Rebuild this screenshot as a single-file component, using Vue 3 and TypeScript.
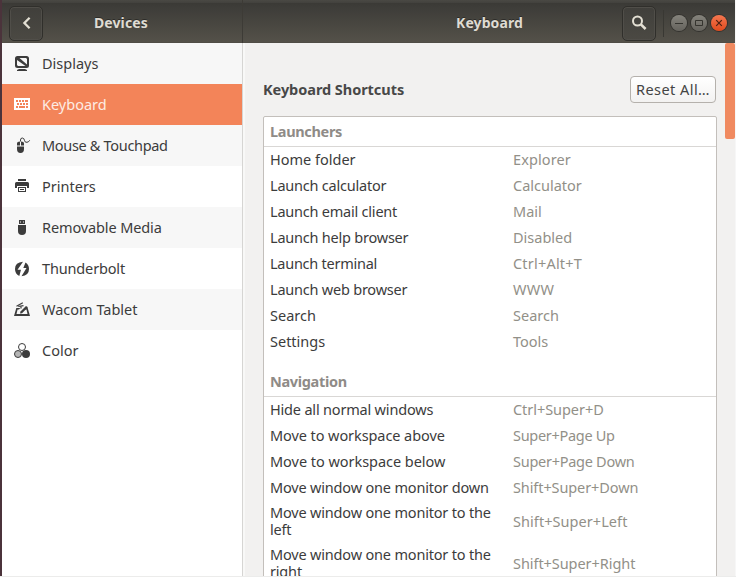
<script setup lang="ts">
// `t` and `kt` are letter-spacing adjustments in pixels.
interface Device { id: string; label: string; t?: number }
interface Shortcut { name: string; keys: string; t?: number; kt?: number }
interface Group { title: string; items: Shortcut[] }

const devices: Device[] = [
  { id: 'displays', label: 'Displays' },
  { id: 'keyboard', label: 'Keyboard' },
  { id: 'mouse', label: 'Mouse & Touchpad', t: -0.32 },
  { id: 'printers', label: 'Printers' },
  { id: 'media', label: 'Removable Media', t: -0.12 },
  { id: 'thunderbolt', label: 'Thunderbolt', t: -0.15 },
  { id: 'wacom', label: 'Wacom Tablet' },
  { id: 'color', label: 'Color' },
]

const groups: Group[] = [
  {
    title: 'Launchers',
    items: [
      { name: 'Home folder', keys: 'Explorer', kt: 0.1 },
      { name: 'Launch calculator', keys: 'Calculator', t: -0.22 },
      { name: 'Launch email client', keys: 'Mail', t: -0.22 },
      { name: 'Launch help browser', keys: 'Disabled', t: -0.22 },
      { name: 'Launch terminal', keys: 'Ctrl+Alt+T', t: -0.26, kt: 0.2 },
      { name: 'Launch web browser', keys: 'WWW', t: -0.22, kt: 0.3 },
      { name: 'Search', keys: 'Search' },
      { name: 'Settings', keys: 'Tools' },
    ],
  },
  {
    title: 'Navigation',
    items: [
      { name: 'Hide all normal windows', keys: 'Ctrl+Super+D', t: -0.19, kt: -0.05 },
      { name: 'Move to workspace above', keys: 'Super+Page Up', t: -0.08, kt: -0.3 },
      { name: 'Move to workspace below', keys: 'Super+Page Down', t: -0.04, kt: -0.27 },
      { name: 'Move window one monitor down', keys: 'Shift+Super+Down', t: -0.18, kt: -0.1 },
      { name: 'Move window one monitor to the left', keys: 'Shift+Super+Left', t: -0.18, kt: 0.06 },
      { name: 'Move window one monitor to the right', keys: 'Shift+Super+Right', t: -0.18, kt: -0.06 },
    ],
  },
]

const spacing = (v?: number) => ({ letterSpacing: `${v ?? 0}px` })
</script>

<template>
  <div class="window">
    <header class="bar">
      <div class="bar-left">
        <button class="hbtn" aria-label="Back">
          <svg width="16" height="16" viewBox="0 0 16 16"><path d="M11.600 2.800 6.400 8l5.200 5.200" fill="none" stroke="#e3dfd3" stroke-width="2.300" /></svg>
        </button>
        <h1 class="title">Devices</h1>
      </div>
      <div class="bar-right">
        <h1 class="title">Keyboard</h1>
        <button class="hbtn" aria-label="Find">
          <svg width="16" height="16" viewBox="0 0 16 16"><circle cx="6.500" cy="6" r="4.500" fill="none" stroke="#e3dfd3" stroke-width="2" /><path d="m9.600 9.100 5 4.900" stroke="#e3dfd3" stroke-width="2.600" /></svg>
        </button>
        <div class="controls">
          <span class="ctl"><svg width="16" height="16" viewBox="0 0 16 16"><path d="M4 8.500h8" stroke="#35342f" /></svg></span>
          <span class="ctl"><svg width="16" height="16" viewBox="0 0 16 16"><path d="M4.500 5.500h7v5h-7z" fill="none" stroke="#35342f" /></svg></span>
          <span class="ctl close"><svg width="16" height="16" viewBox="0 0 16 16"><path d="m5.200 5.200 5.600 5.600m0-5.600-5.600 5.600" stroke="#4b2113" stroke-width="1.200" /></svg></span>
        </div>
      </div>
    </header>
    <div class="body">
      <nav class="side">
        <a v-for="d in devices" :key="d.id" class="dev" :class="[d.id, { active: d.id === 'keyboard' }]">
          <svg class="ico" width="16" height="16" viewBox="0 0 16 16" fill="currentColor">
            <g v-if="d.id === 'displays'"><path fill-rule="evenodd" d="M3.500 0h9A2.500 2.500 0 0 1 15 2.500v7a2.500 2.500 0 0 1-2.500 2.500h-9A2.500 2.500 0 0 1 1 9.500v-7A2.500 2.500 0 0 1 3.500 0zM3 3v6l1 1h8l1-1V3l-1-1H4z" /><path d="M3 2h2.500L13 8.500V10h-1.500L3 4z" /><path d="M5 13h6l2 1v1H3v-1z" /></g>
            <g v-else-if="d.id === 'keyboard'"><path fill-rule="evenodd" d="M0 1h16v12H0zM2 3v2h2V3zm3 0v2h2V3zm3 0v2h2V3zm3 0v2h3V3zM3 6v2h2V6zm3 0v2h2V6zm3 0v2h2V6zm3 0v2h2V6zM2 9v2h2V9zm3 0v2h6V9zm7 0v2h2V9z" /></g>
            <g v-else-if="d.id === 'mouse'"><path d="M3 7.500V5.500Q3 3.500 6 3.500v4zM7 3.500Q10 3.500 10 5.500v2H7zM3 8.500h7v2.500a3.500 4 0 0 1-7 0z" /><path d="M6.500 3.500V2Q6.500 0 8.300 0T10.500 2.400 13 4.300 15.700 2.300" fill="none" stroke="currentColor" /></g>
            <g v-else-if="d.id === 'printers'"><path d="M4 0h8v2H4zM2.500 3h11Q15 3 15 4.500V9h-2V7H3v2H1V4.500Q1 3 2.500 3z" /><path fill-rule="evenodd" d="M4 8h8v5H4zM5 9v3h6V9z" /><path d="M6 10h4v1H6z" /></g>
            <g v-else-if="d.id === 'media'"><path fill-rule="evenodd" d="M5 0h6v4H5zM6 1.500v1h1v-1zm3 0v1h1v-1z" /><path d="M4 5h8v6q0 4-4 4T4 11z" /></g>
            <g v-else-if="d.id === 'thunderbolt'"><path d="M9 .8 3.500 8.800H7L5.300 15Q1 13 1 8 1 1.300 9 .8z" /><path d="M11.500 1.600Q15 4 15 8q0 6.500-7.500 7.200L12.500 7H9.300z" /></g>
            <g v-else-if="d.id === 'wacom'"><path d="M2.300 6h4L5 7.500H3.600L2.500 12h11l-1-4.500H10L11.300 6h2.400L16 14H0z" /><path d="m6.500 9.500 5.500-5.500 2 1.200-6 6L6 11.500z" /><path d="M2.500 4.300 8.800.7M4.300 4.500 9.500 3.600M7 4.500v2" fill="none" stroke="currentColor" stroke-width="1.200" /></g>
            <g v-else><circle cx="8" cy="4" r="3.500" fill="none" stroke="currentColor" /><circle cx="4" cy="11" r="3.500" fill="#b5b5b5" stroke="currentColor" /><circle cx="12" cy="11" r="4" /></g>
          </svg>
          <span :style="spacing(d.t)">{{ d.label }}</span>
        </a>
      </nav>
      <main class="main">
        <div class="heading"><h2>Keyboard Shortcuts</h2><button class="reset">Reset All…</button></div>
        <div class="list">
          <section v-for="g in groups" :key="g.title" class="group">
            <h3>{{ g.title }}</h3>
            <div v-for="s in g.items" :key="s.name" class="row"><span class="name" :style="spacing(s.t)">{{ s.name }}</span><span class="keys" :style="spacing(s.kt)">{{ s.keys }}</span></div>
          </section>
        </div>
        <div class="thumb"></div>
      </main>
    </div>
  </div>
</template>

<style>
body { background: #ececeb; overflow: hidden; }
</style>
<style scoped>
* { box-sizing: border-box; }
.window { width: 736px; height: 576px; overflow: hidden; display: flex; flex-direction: column; border-left: 2px solid #4b333b; border-right: 1px solid #f7f7f7; background: #f2f1f0; font: 14.5px/17px "Noto Sans", sans-serif; color: #3c3c3c; }
h1, h2, h3 { margin: 0; font-size: inherit; font-weight: 700; }
h2 { color: #484848; letter-spacing: -0.05px; }
button { font: inherit; padding: 0; }
.bar { flex: none; height: 43px; display: flex; color: #dfdbd2; background: linear-gradient(#4a4944 0, #42413d 3px, #3b3a36 3px, #3e3d39 8px, #545149 42px, #4c4943 43px); }
.bar-left { width: 241px; padding: 3px 0 0 7px; display: flex; align-items: center; border-right: 1px solid #3d3b36; }
.bar-left .title { margin-left: 51px; }
.bar-right { flex: 1; padding-top: 3px; display: flex; align-items: center; }
.bar-right .title { margin-left: 213px; width: 166px; }
.title { font-size: 14px; line-height: 20px; letter-spacing: 0.1px; text-shadow: 0 -1px #2d2c29; }
.hbtn { width: 34px; height: 35px; border: 1px solid #302f2b; border-radius: 5px; background: linear-gradient(#403f3b, #4b4943); box-shadow: inset 0 0 0 1px #504e49; display: flex; align-items: center; justify-content: center; }
.controls { margin-left: 7px; padding-left: 7px; height: 27px; display: flex; align-items: center; gap: 4px; border-left: 1px solid #393833; }
.ctl { width: 16px; height: 16px; border-radius: 50%; background: linear-gradient(#85837c, #65635d); box-shadow: 0 0 0 1px #33322e; }
.ctl svg { display: block; }
.close { background: linear-gradient(#f47750, #df4a1d); }
.body { flex: 1; min-height: 0; display: flex; }
.side { width: 241px; background: #fff; border-right: 1px solid #d6d5d3; }
.dev { height: 41px; display: flex; align-items: center; gap: 12px; padding-left: 12px; }
.ico { margin-top: 1px; overflow: visible; }
.dev:nth-child(odd) { background: #f7f7f7; }
.dev.active { background: #f38459; color: #fff; }
.dev.active span { color: #fdece4; }
.main { position: relative; flex: 1; padding: 33px 18px 0 20px; overflow: hidden; box-shadow: inset 2px 0 #f8f8f7; }
.heading { height: 27px; display: flex; align-items: center; justify-content: space-between; }
.reset { width: 86px; height: 27px; margin-right: 1px; border: 1px solid #b5b1ac; border-radius: 4px; background: linear-gradient(#fff, #f3f2f1); color: #444; white-space: nowrap; letter-spacing: 0.45px; }
.list { margin-top: 13px; height: 600px; border: 1px solid #c3bfbb; border-radius: 2px; background: #fff; }
.group + .group { margin-top: 12px; }
h3 { height: 30px; padding: 6px 6px 0; border-bottom: 1px solid #d9d7d5; color: #8f8b87; letter-spacing: -0.33px; }
.row { min-height: 26px; padding: 3px 6px 5px; display: flex; align-items: center; }
.name { width: 243px; padding-right: 15px; }
.keys { color: #929088; white-space: nowrap; }
.thumb { position: absolute; top: 0; right: 0; width: 10px; height: 96px; background: #f08a60; border-radius: 2px; }
</style>
